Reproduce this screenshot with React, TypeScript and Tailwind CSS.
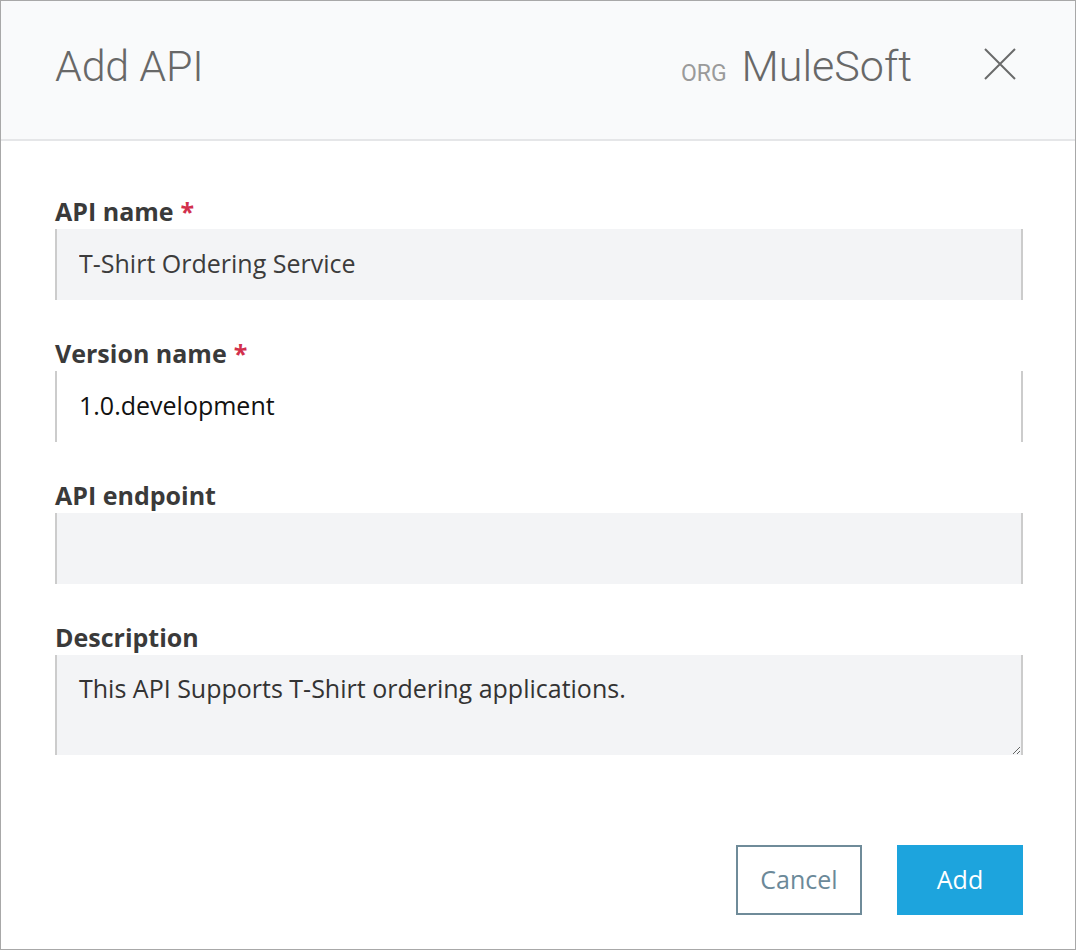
import React from "react";

const fieldFont = { fontFamily: '"Open Sans", "Liberation Sans", sans-serif' };

function Label({ text, required }: { text: string; required?: boolean }) {
  return (
    <label className="block h-[28px] text-[25px] leading-[28px] font-bold text-[#3a3a3a] mb-[4px]">
      {text}
      {required && <span className="ml-[7px] text-[#d2304c]">*</span>}
    </label>
  );
}

export default function App() {
  return (
    <div
      className="w-[1076px] h-[950px] border border-[#a8a8a8] bg-white flex flex-col"
      style={fieldFont}
    >
      {/* header */}
      <div
        className="h-[140px] shrink-0 bg-[#f9fafb] border-b-2 border-[#e5e6e8] flex items-center pl-[54px] pr-[59px]"
        style={{ fontFamily: 'Roboto, "Liberation Sans", sans-serif' }}
      >
        <h1 className="text-[43px] font-light text-[#686868] tracking-[-0.2px] -mt-[8px]">Add API</h1>
        <div className="ml-auto flex items-baseline -mt-[8px]">
          <span className="text-[23px] text-[#9a9a9a] mr-[15px]">ORG</span>
          <span className="text-[43px] font-light text-[#686868]">MuleSoft</span>
        </div>
        <button className="ml-[72px] w-[32px] h-[32px] flex items-center justify-center -mt-[12px]">
          <svg width="32" height="32" viewBox="0 0 32 32" fill="none">
            <path d="M1 1 L31 31 M31 1 L1 31" stroke="#6a6a6a" strokeWidth="2" />
          </svg>
        </button>
      </div>

      {/* body */}
      <div className="flex-1 flex flex-col pl-[54px] pr-[52px] pt-[56px]">
        <div>
          <Label text="API name" required />
          <input
            readOnly
            defaultValue="T-Shirt Ordering Service"
            className="block w-full h-[71px] bg-[#f3f4f6] border-x-2 border-[#cccccc] pl-[22px] pb-[4px] text-[25px] text-[#3c3c3c] outline-none"
          />
        </div>
        <div className="mt-[39px]">
          <Label text="Version name" required />
          <input
            readOnly
            defaultValue="1.0.development"
            className="block w-full h-[71px] bg-white border-x-2 border-[#cccccc] pl-[22px] pb-[4px] text-[25px] text-[#111111] outline-none"
          />
        </div>
        <div className="mt-[39px]">
          <Label text="API endpoint" />
          <input
            readOnly
            defaultValue=""
            className="block w-full h-[71px] bg-[#f3f4f6] border-x-2 border-[#cccccc] pl-[22px] pb-[4px] text-[25px] text-[#3c3c3c] outline-none"
          />
        </div>
        <div className="mt-[39px]">
          <Label text="Description" />
          <textarea
            readOnly
            defaultValue="This API Supports T-Shirt ordering applications."
            className="block w-full h-[100px] bg-[#f3f4f6] border-x-2 border-[#cccccc] pl-[22px] pt-[16px] text-[25px] leading-[34px] text-[#333333] outline-none"
          />
        </div>

        <div className="flex justify-end gap-[35px] mt-[90px]">
          <button className="w-[126px] h-[70px] border-2 border-[#6f8b99] text-[25px] text-[#6b8999] bg-white">
            Cancel
          </button>
          <button className="w-[126px] h-[70px] bg-[#1da4dd] text-[25px] text-white">Add</button>
        </div>
      </div>
    </div>
  );
}
